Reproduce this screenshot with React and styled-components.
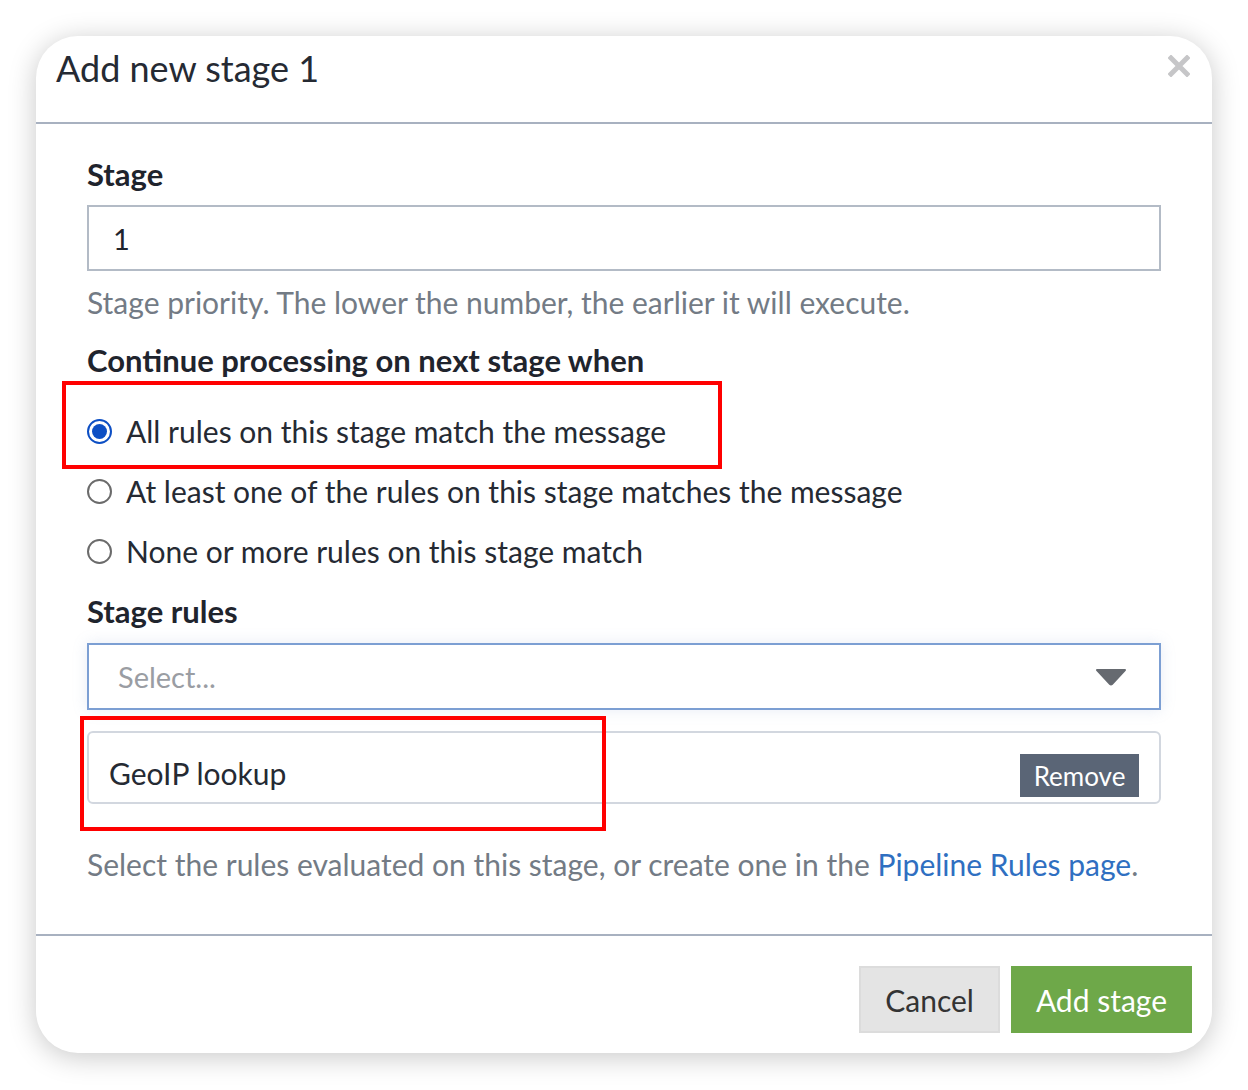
import React from "react";
import styled, { createGlobalStyle } from "styled-components";

const Global = createGlobalStyle`
  html, body { margin: 0; padding: 0; background: #ffffff; }
  body { font-family: Lato, "Open Sans", sans-serif; color: #2a2f3a; }
  * { box-sizing: border-box; }
`;

const Page = styled.div`
  width: 1248px;
  height: 1090px;
  padding: 36px 36px 37px 36px;
  background: #ffffff;
`;

const Card = styled.div`
  position: relative;
  width: 1176px;
  height: 1017px;
  background: #fff;
  border-radius: 42px;
  box-shadow: 0 4px 28px rgba(0, 0, 0, 0.22);
  display: flex;
  flex-direction: column;
`;

const Header = styled.div`
  height: 88px;
  border-bottom: 2px solid #a8b1c0;
  display: flex;
  align-items: flex-start;
  justify-content: space-between;
  padding: 10px 22px 0 20px;
`;

const Title = styled.h1`
  margin: 0;
  font-size: 36px;
  font-weight: 400;
  color: #252a33;
  line-height: 44px;
`;

const Close = styled.button`
  border: 0;
  background: transparent;
  padding: 0;
  margin-top: 9px;
  width: 22px;
  height: 22px;
  display: flex;
`;

const Body = styled.div`
  padding: 33px 51px 0 51px;
  flex: 1;
`;

const Label = styled.div`
  font-size: 31px;
  font-weight: 700;
  color: #1f242d;
  line-height: 35px;
  margin-bottom: ${(p) => p.$mb || 0}px;
`;

const TextInput = styled.div`
  height: 66px;
  border: 2px solid #b3bbc6;
  display: flex;
  align-items: center;
  padding-left: 24px;
  font-size: 29px;
  color: #1f242d;
`;

const Help = styled.div`
  font-size: 30px;
  color: #737b85;
  line-height: 34px;
  margin-top: ${(p) => p.$mt || 0}px;
  margin-bottom: ${(p) => p.$mb || 0}px;
`;

const Link = styled.a`
  color: #2f6fc1;
  text-decoration: none;
`;

const RadioList = styled.div`
  display: flex;
  flex-direction: column;
  gap: 24px;
  margin-top: 35px;
  margin-bottom: 25px;
`;

const RadioRow = styled.label`
  display: flex;
  align-items: center;
  gap: 14px;
  height: 36px;
  font-size: 30px;
  color: #252a33;
`;

const RadioCircle = styled.span`
  width: 25px;
  height: 25px;
  border-radius: 50%;
  border: 2px solid ${(p) => (p.$on ? "#0d4fc4" : "#6b6b6b")};
  display: flex;
  align-items: center;
  justify-content: center;
  flex: none;
  &::after {
    content: "";
    width: 15px;
    height: 15px;
    border-radius: 50%;
    background: ${(p) => (p.$on ? "#0d4fc4" : "transparent")};
  }
`;

const Select = styled.div`
  margin-top: 14px;
  height: 67px;
  border: 2px solid #7c9fd3;
  box-shadow: 0 0 14px rgba(120, 150, 200, 0.18);
  display: flex;
  align-items: center;
  justify-content: space-between;
  padding: 0 32px 0 29px;
  font-size: 29px;
  color: #9a9da3;
`;

const RuleItem = styled.div`
  margin-top: 21px;
  height: 73px;
  border: 2px solid #d2d7df;
  border-radius: 6px;
  display: flex;
  align-items: flex-start;
  justify-content: space-between;
  padding: 0 20px 0 20px;
  font-size: 30px;
  color: #252a33;
`;

const RuleName = styled.span`
  margin-top: 22px;
  line-height: 36px;
`;

const RemoveBtn = styled.button`
  border: 0;
  background: #5a6576;
  color: #fff;
  font-family: inherit;
  font-size: 26px;
  height: 43px;
  width: 119px;
  padding: 0;
  margin-top: 21px;
`;

const Footer = styled.div`
  border-top: 2px solid #a8b1c0;
  height: 119px;
  display: flex;
  justify-content: flex-end;
  align-items: flex-start;
  gap: 11px;
  padding: 30px 20px 0 0;
`;

const Button = styled.button`
  height: 67px;
  padding: 0 ${(p) => p.$px}px;
  border: 2px solid ${(p) => (p.$primary ? "#6ea849" : "#dcdcdc")};
  background: ${(p) => (p.$primary ? "#6ea849" : "#e4e4e4")};
  color: ${(p) => (p.$primary ? "#ffffff" : "#333333")};
  font-family: inherit;
  font-size: 30px;
`;

const Annotation = styled.div`
  position: absolute;
  border: 4px solid #ff0000;
  left: ${(p) => p.$x}px;
  top: ${(p) => p.$y}px;
  width: ${(p) => p.$w}px;
  height: ${(p) => p.$h}px;
  pointer-events: none;
`;

const Caret = () => (
  <svg width="32" height="18" viewBox="0 0 32 18">
    <path d="M2 2 L30 2 L17 16 Q16 17 15 16 Z" fill="#666a70" stroke="#666a70" strokeWidth="2" strokeLinejoin="round" />
  </svg>
);

const CloseIcon = () => (
  <svg width="22" height="22" viewBox="0 0 22 22">
    <path d="M3 3 L19 19 M19 3 L3 19" stroke="#c6c6c8" strokeWidth="5" strokeLinecap="square" />
  </svg>
);

export default function App() {
  return (
    <Page>
      <Global />
      <Card>
        <Header>
          <Title>Add new stage 1</Title>
          <Close aria-label="close">
            <CloseIcon />
          </Close>
        </Header>
        <Body>
          <Label $mb={13}>Stage</Label>
          <TextInput>1</TextInput>
          <Help $mt={14} $mb={24}>
            Stage priority. The lower the number, the earlier it will execute.
          </Help>
          <Label>Continue processing on next stage when</Label>
          <RadioList>
            <RadioRow>
              <RadioCircle $on />
              All rules on this stage match the message
            </RadioRow>
            <RadioRow>
              <RadioCircle />
              At least one of the rules on this stage matches the message
            </RadioRow>
            <RadioRow>
              <RadioCircle />
              None or more rules on this stage match
            </RadioRow>
          </RadioList>
          <Label>Stage rules</Label>
          <Select>
            Select...
            <Caret />
          </Select>
          <RuleItem>
            <RuleName>GeoIP lookup</RuleName>
            <RemoveBtn>Remove</RemoveBtn>
          </RuleItem>
          <Help $mt={43}>
            Select the rules evaluated on this stage, or create one in the{" "}
            <Link href="#">Pipeline Rules page</Link>.
          </Help>
        </Body>
        <Footer>
          <Button $px={24}>Cancel</Button>
          <Button $primary $px={23}>Add stage</Button>
        </Footer>
        <Annotation $x={26} $y={345} $w={660} $h={88} />
        <Annotation $x={44} $y={680} $w={526} $h={115} />
      </Card>
    </Page>
  );
}
